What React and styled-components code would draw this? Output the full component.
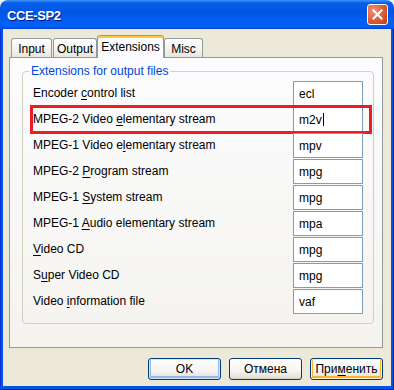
import React from "react";
import styled, { createGlobalStyle, css } from "styled-components";

const GlobalStyle = createGlobalStyle`
  html, body {
    margin: 0;
    padding: 0;
    background: #f4f4f4;
  }
  * {
    box-sizing: border-box;
  }
`;

const tabs = [
  { label: "Input", width: 41 },
  { label: "Output", width: 44, gap: 1 },
  { label: "Extensions", width: 67, active: true },
  { label: "Misc", width: 39 },
];

// label text is split around the mnemonic (underlined) letter
const rows = [
  { pre: "Encoder ", key: "c", post: "ontrol list", ext: "ecl" },
  { pre: "MPEG-2 Video ", key: "e", post: "lementary stream", ext: "m2v", marked: true },
  { pre: "MPEG-1 Video e", key: "l", post: "ementary stream", ext: "mpv" },
  { pre: "MPEG-2 ", key: "P", post: "rogram stream", ext: "mpg" },
  { pre: "MPEG-1 ", key: "S", post: "ystem stream", ext: "mpg" },
  { pre: "MPEG-1 ", key: "A", post: "udio elementary stream", ext: "mpa" },
  { pre: "", key: "V", post: "ideo CD", ext: "mpg" },
  { pre: "S", key: "u", post: "per Video CD", ext: "mpg" },
  { pre: "Video ", key: "i", post: "nformation file", ext: "vaf" },
];

const Window = styled.div`
  width: 394px;
  height: 390px;
  display: flex;
  flex-direction: column;
  border-radius: 8px 8px 0 0;
  overflow: hidden;
  font-family: "Liberation Sans", Arial, sans-serif;
  font-size: 12px;
  color: #000;
`;

const TitleBar = styled.div`
  height: 29px;
  flex: none;
  display: flex;
  align-items: center;
  justify-content: space-between;
  padding: 0 6px 0 7px;
  background: linear-gradient(
    to bottom,
    #3d95ff 0%,
    #0a5fe8 10%,
    #0055e5 40%,
    #0062f5 85%,
    #0058ee 95%,
    #003dd7 100%
  );
`;

const Title = styled.span`
  color: #fff;
  font-weight: bold;
  font-size: 13px;
  letter-spacing: -0.4px;
  text-shadow: 1px 1px 0 #0a1883;
  padding-top: 1px;
`;

const CloseButton = styled.div`
  width: 21px;
  height: 21px;
  border: 1px solid #fff;
  border-radius: 3px;
  background: radial-gradient(circle at 30% 30%, #f39374 0%, #e05a30 55%, #c2380e 100%);
  display: flex;
  align-items: center;
  justify-content: center;
`;

const Frame = styled.div`
  flex: 1;
  display: flex;
  padding: 0 3px 4px 3px;
  background: #0054e3;
  box-shadow: inset 1px 0 #0831d9, inset -1px 0 #001ea0, inset 0 -1px #001ea0;
`;

const Body = styled.div`
  flex: 1;
  display: flex;
  flex-direction: column;
  background: #ece9d8;
  padding: 6px 8px 0 6px;
`;

const TabStrip = styled.div`
  height: 22px;
  display: flex;
  align-items: flex-end;
  padding-left: 2px;
  position: relative;
  z-index: 1;
`;

const Tab = styled.div`
  width: ${(p) => p.$width}px;
  margin-left: ${(p) => p.$gap || 0}px;
  height: 19px;
  display: flex;
  align-items: center;
  justify-content: center;
  border: 1px solid #919b9c;
  border-bottom: none;
  border-radius: 3px 3px 0 0;
  background: linear-gradient(#ffffff, #f3f2ed 60%, #e8e6dc);
  padding-top: 1px;

  ${(p) =>
    p.$active &&
    css`
      height: 23px;
      margin-bottom: -1px;
      background: #fcfcfe;
      border-top: 1px solid #e68b2c;
      box-shadow: inset 0 2px 0 #ffc73c;
      padding-top: 1px;
      padding-bottom: 1px;
    `}
`;

const Panel = styled.div`
  height: 291px;
  border: 1px solid #919b9c;
  background: linear-gradient(#fcfcfe, #f4f3ee);
  padding: 6px 8px 0 12px;
`;

const Group = styled.fieldset`
  margin: 0;
  padding: 0 10px 8px 10px;
  border: 1px solid #d0d0bf;
  border-radius: 4px;
`;

const Legend = styled.legend`
  color: #0046d5;
  line-height: 14px;
  padding: 0 2px;
  margin-left: -4px;
`;

const Rows = styled.div`
  padding-top: 3px;
  display: flex;
  flex-direction: column;
`;

const Row = styled.div`
  height: 26px;
  display: flex;
  justify-content: space-between;
  position: relative;
`;

const Label = styled.span`
  line-height: 25px;
  white-space: nowrap;

  u {
    text-decoration: underline;
    text-underline-offset: 2px;
  }
`;

const Field = styled.div`
  width: 70px;
  height: 25px;
  border: 1px solid #7f9db9;
  background: #fff;
  padding-left: 5px;
  line-height: 22px;
  display: flex;
  align-items: center;
`;

const Caret = styled.span`
  width: 1px;
  height: 13px;
  background: #000;
  margin-left: 1px;
`;

const Marker = styled.div`
  position: absolute;
  top: -2px;
  bottom: -1px;
  left: -3px;
  right: -9px;
  border: 3px solid #ed1c24;
  pointer-events: none;
`;

const ButtonRow = styled.div`
  margin-top: 10px;
  display: flex;
  justify-content: flex-end;
  gap: 8px;
`;

const Button = styled.div`
  width: 73px;
  height: 22px;
  border: 1px solid #003c74;
  border-radius: 3px;
  background: linear-gradient(#ffffff, #f5f4f0 60%, #e6e3da 90%, #d6d0c5);
  display: flex;
  align-items: center;
  justify-content: center;

  ${(p) =>
    p.$variant === "default" &&
    css`
      box-shadow: inset 0 0 0 1px #cee7ff, inset 0 -1px 0 2px #98b8ea;
    `}

  ${(p) =>
    p.$variant === "hover" &&
    css`
      box-shadow: inset 0 0 0 1px #fff0cf, inset 0 -1px 0 2px #f8b330;
    `}

  u {
    text-underline-offset: 2px;
  }
`;

const CloseIcon = () => (
  <svg width="11" height="11" viewBox="0 0 11 11">
    <path d="M1.5 1.5 L9.5 9.5 M9.5 1.5 L1.5 9.5" stroke="#fff" strokeWidth="2" strokeLinecap="square" />
  </svg>
);

export default function App() {
  return (
    <>
      <GlobalStyle />
      <Window>
        <TitleBar>
          <Title>CCE-SP2</Title>
          <CloseButton>
            <CloseIcon />
          </CloseButton>
        </TitleBar>
        <Frame>
          <Body>
            <TabStrip>
              {tabs.map((t) => (
                <Tab key={t.label} $width={t.width} $gap={t.gap} $active={t.active}>
                  {t.label}
                </Tab>
              ))}
            </TabStrip>
            <Panel>
              <Group>
                <Legend>Extensions for output files</Legend>
                <Rows>
                  {rows.map((r, i) => (
                    <Row key={i}>
                      <Label>
                        {r.pre}
                        <u>{r.key}</u>
                        {r.post}
                      </Label>
                      <Field>
                        {r.ext}
                        {r.marked && <Caret />}
                      </Field>
                      {r.marked && <Marker />}
                    </Row>
                  ))}
                </Rows>
              </Group>
            </Panel>
            <ButtonRow>
              <Button $variant="default">OK</Button>
              <Button>Отмена</Button>
              <Button $variant="hover">
                При<u>м</u>енить
              </Button>
            </ButtonRow>
          </Body>
        </Frame>
      </Window>
    </>
  );
}
